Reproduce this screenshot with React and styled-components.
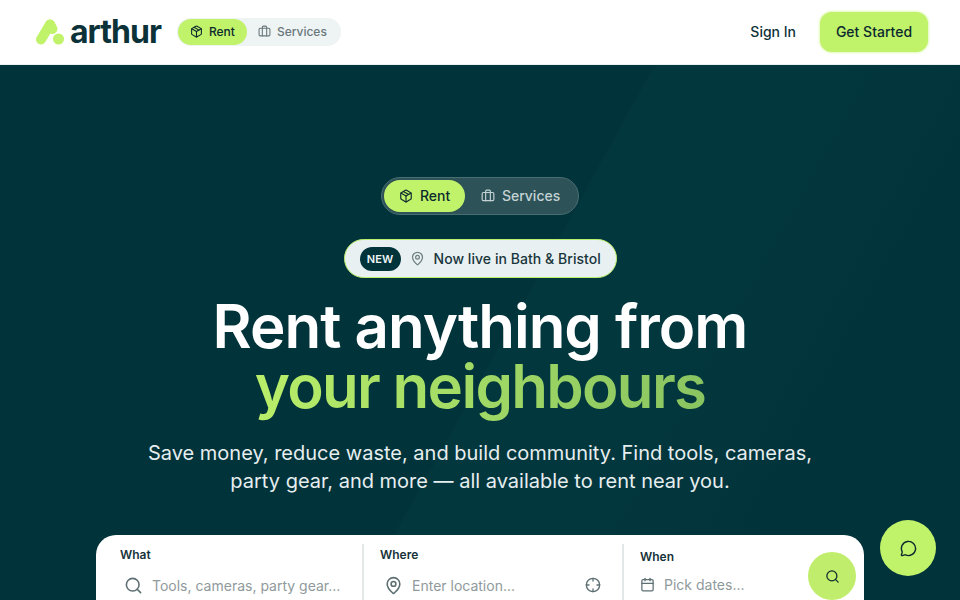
import React from 'react';
import styled, { createGlobalStyle } from 'styled-components';
import { Package, Briefcase, MapPin, Search, Crosshair, Calendar, MessageCircle } from 'lucide-react';

const GlobalStyle = createGlobalStyle`
  html, body {
    margin: 0;
    height: 600px;
    overflow: hidden;
    background: #01333a;
    font-family: Inter, "Liberation Sans", sans-serif;
  }
  * { box-sizing: border-box; }
`;

const Header = styled.header`
  height: 65px;
  background: #fff;
  border-bottom: 1px solid #e6f1f2;
  display: flex;
  align-items: center;
  justify-content: space-between;
  padding: 0 32px 0 36px;
`;

const Left = styled.div`
  display: flex;
  align-items: center;
  gap: 16px;
`;

const Logo = styled.div`
  display: flex;
  align-items: center;
  gap: 5px;
  color: #0b3238;
  font-size: 32px;
  font-weight: 700;
  letter-spacing: -1px;
  line-height: 1;
`;

const LogoText = styled.span`
  margin-top: -1px;
`;

const MiniToggle = styled.div`
  display: flex;
  align-items: center;
  height: 28px;
  padding: 1px 14px 1px 1px;
  gap: 11px;
  border-radius: 14px;
  background: #eef3f4;
`;

const MiniTab = styled.div`
  display: flex;
  align-items: center;
  gap: 6px;
  height: 26px;
  padding: ${p => (p.$active ? '0 12px 1px' : '0 0 1px')};
  border-radius: 13px;
  font-size: 12px;
  font-weight: 500;
  color: ${p => (p.$active ? '#0b2a2e' : '#69787c')};
  background: ${p => (p.$active ? '#c0f26a' : 'transparent')};
`;

const Actions = styled.div`
  display: flex;
  align-items: center;
  gap: 24px;
`;

const SignIn = styled.span`
  font-size: 14px;
  font-weight: 500;
  color: #0f3238;
  padding-bottom: 1px;
`;

const Cta = styled.div`
  width: 108px;
  height: 40px;
  padding-bottom: 1px;
  display: flex;
  align-items: center;
  justify-content: center;
  border-radius: 12px;
  background: #c0f26a;
  box-shadow: 0 0 3px #c0f26a;
  font-size: 14px;
  font-weight: 500;
  color: #0b2a2e;
`;

const Hero = styled.main`
  height: 535px;
  position: relative;
  overflow: hidden;
  background: #01333a;
  display: flex;
  flex-direction: column;
  align-items: center;
  padding-top: 112px;
`;

const Streak = styled.div`
  position: absolute;
  inset: 0;
  background: linear-gradient(119deg, transparent 0 52%, #03373e 52.3% 66%, transparent 82%);
  pointer-events: none;
`;

const HeroToggle = styled.div`
  position: relative;
  display: flex;
  align-items: center;
  height: 38px;
  width: 198px;
  padding: 2px;
  border-radius: 19px;
  background: #2d5358;
  border: 1px solid #4a6d72;
`;

const HeroTab = styled.div`
  display: flex;
  align-items: center;
  justify-content: center;
  gap: 7px;
  height: 32px;
  padding-bottom: 1px;
  width: ${p => (p.$active ? '82px' : '112px')};
  border-radius: 16px;
  font-size: 14px;
  font-weight: 500;
  color: ${p => (p.$active ? '#0b2a2e' : '#c4d2d4')};
  background: ${p => (p.$active ? '#c0f26a' : 'transparent')};
`;

const Badge = styled.div`
  position: relative;
  margin-top: 24px;
  height: 39px;
  width: 273px;
  padding-left: 15px;
  display: flex;
  align-items: center;
  white-space: nowrap;
  border-radius: 20px;
  background: #e9f0f1;
  border: 1px solid #bdf06a;
  font-size: 14px;
  font-weight: 500;
  letter-spacing: 0.05px;
  color: #17353b;
`;

const NewTag = styled.span`
  flex: none;
  width: 41px;
  height: 24px;
  display: flex;
  align-items: center;
  justify-content: center;
  border-radius: 12px;
  background: #01333a;
  color: #f0f6f6;
  font-size: 11px;
  font-weight: 600;
  margin-right: 9px;
`;

const PinWrap = styled.span`
  display: flex;
  color: #6c7f83;
  margin-right: 9px;
`;

const Title = styled.h1`
  position: relative;
  margin: 18px 0 0;
  font-size: 60px;
  line-height: 60px;
  font-weight: 600;
  letter-spacing: -1px;
  text-align: center;
  color: #fff;
`;

const Accent = styled.span`
  display: block;
  padding-bottom: 14px;
  margin-bottom: -14px;
  letter-spacing: -1.7px;
  background: linear-gradient(90deg, #bdf26a, #84c060);
  -webkit-background-clip: text;
  background-clip: text;
  color: transparent;
`;

const Lead = styled.p`
  position: relative;
  margin: 23px 0 0;
  width: 700px;
  font-size: 20px;
  line-height: 28px;
  text-align: center;
  color: #e6eeef;
`;

const SearchCard = styled.section`
  position: absolute;
  top: 535px;
  left: 96px;
  width: 768px;
  height: 120px;
  background: #fff;
  border-radius: 20px 20px 0 0;
  display: grid;
  grid-template-columns: 268px 260px 240px;
  padding-top: 9px;
`;

const Field = styled.div`
  padding: ${p => (p.$last ? '4px 0 0 16px' : '2px 0 0 24px')};
  border-right: ${p => (p.$last ? 'none' : '2px solid #e4e7e8')};
  ${p => p.$mid && 'padding-left: 16px;'}
`;

const Label = styled.div`
  font-size: 12px;
  font-weight: 600;
  line-height: 18px;
  color: #17333a;
`;

const InputRow = styled.div`
  display: flex;
  align-items: center;
  gap: 9px;
  margin-top: ${p => (p.$last ? '7px' : '10px')};
  padding-left: ${p => (p.$last ? '0' : '4px')};
  height: 22px;
  font-size: 14px;
  color: #8f9a9c;
  svg { color: #5d6f73; flex: none; }
`;

const Placeholder = styled.span`
  flex: 1;
`;

const Locate = styled.span`
  display: flex;
  margin-right: 21px;
`;

const SearchBtn = styled.div`
  position: absolute;
  top: 17px;
  right: 8px;
  width: 48px;
  height: 48px;
  border-radius: 50%;
  background: #c0ee6c;
  color: #0b2a2e;
  display: flex;
  align-items: center;
  justify-content: center;
`;

const ChatFab = styled.div`
  position: fixed;
  left: 880px;
  top: 520px;
  width: 56px;
  height: 56px;
  border-radius: 50%;
  background: #c0f26a;
  color: #0b2a2e;
  display: flex;
  align-items: center;
  justify-content: center;
`;

function LogoMark() {
  return (
    <svg width="29" height="26" viewBox="0 0 29 26">
      <path d="M14 5.5 L5 20.5" stroke="#c0f26a" strokeWidth="10" strokeLinecap="round" fill="none" />
      <path d="M14 5.5 L16.5 10" stroke="#c0f26a" strokeWidth="10" strokeLinecap="round" fill="none" />
      <circle cx="22.5" cy="20" r="5.5" fill="#c0f26a" />
    </svg>
  );
}

export default function App() {
  return (
    <>
      <GlobalStyle />
      <Header>
        <Left>
          <Logo>
            <LogoMark />
            <LogoText>arthur</LogoText>
          </Logo>
          <MiniToggle>
            <MiniTab $active><Package size={13} />Rent</MiniTab>
            <MiniTab><Briefcase size={13} />Services</MiniTab>
          </MiniToggle>
        </Left>
        <Actions>
          <SignIn>Sign In</SignIn>
          <Cta>Get Started</Cta>
        </Actions>
      </Header>
      <Hero>
        <Streak />
        <HeroToggle>
          <HeroTab $active><Package size={14} />Rent</HeroTab>
          <HeroTab><Briefcase size={14} />Services</HeroTab>
        </HeroToggle>
        <Badge>
          <NewTag>NEW</NewTag>
          <PinWrap><MapPin size={15} /></PinWrap>
          Now live in Bath &amp; Bristol
        </Badge>
        <Title>
          Rent anything from
          <Accent>your neighbours</Accent>
        </Title>
        <Lead>
          Save money, reduce waste, and build community. Find tools, cameras, party gear, and more — all available to rent near you.
        </Lead>
      </Hero>
      <SearchCard>
        <Field>
          <Label>What</Label>
          <InputRow>
            <Search size={19} />
            <Placeholder>Tools, cameras, party gear...</Placeholder>
          </InputRow>
        </Field>
        <Field $mid>
          <Label>Where</Label>
          <InputRow>
            <MapPin size={19} />
            <Placeholder>Enter location...</Placeholder>
            <Locate><Crosshair size={16} /></Locate>
          </InputRow>
        </Field>
        <Field $last>
          <Label>When</Label>
          <InputRow $last>
            <Calendar size={15} />
            <Placeholder>Pick dates...</Placeholder>
          </InputRow>
        </Field>
        <SearchBtn><Search size={15} /></SearchBtn>
      </SearchCard>
      <ChatFab><MessageCircle size={17} /></ChatFab>
    </>
  );
}
